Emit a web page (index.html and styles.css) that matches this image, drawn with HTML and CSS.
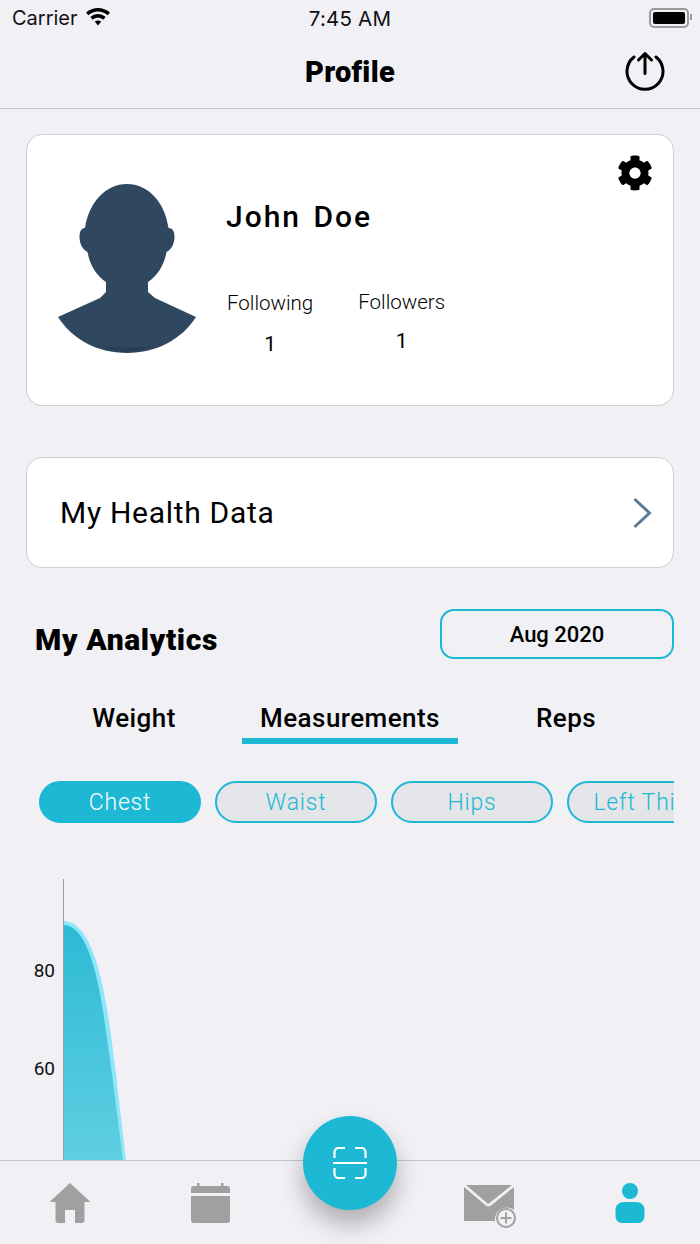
FILE: index.html
```html
<!DOCTYPE html>
<html lang="en">
<head>
    <meta charset="UTF-8">
    <meta name="viewport" content="width=device-width, initial-scale=1.0">
    <title>Profile</title>
    <link rel="stylesheet" href="styles.css">
</head>
<body>
    <div class="status-bar">
        <div class="status-left">
            <span>Carrier</span>
            <svg class="wifi" viewBox="0 0 26 20">
                <path d="M1 6.500C8 .5 18 .5 25 6.500l-2.400 2.700C16.800 4.400 9.200 4.400 3.400 9.200z"/>
                <path d="M5.300 11C10 7 16 7 20.700 11l-2.500 2.700c-3-2.600-7.400-2.600-10.400 0z"/>
                <path d="M9.800 15.600c2-1.500 4.400-1.500 6.400 0L13 19.500z"/>
            </svg>
        </div>
        <span class="status-time">7:45 AM</span>
        <div class="battery"><div class="battery-level"></div></div>
    </div>

    <header class="nav-bar">
        <h1>Profile</h1>
        <svg class="share-icon" viewBox="0 0 40 40">
            <path d="M9 6A18 18 0 1 0 31 6" fill="none" stroke="#000" stroke-width="3" stroke-linecap="round"/>
            <path d="M20 22.500V2.500M13.500 9 20 2.500 26.500 9" fill="none" stroke="#000" stroke-width="3" stroke-linecap="round" stroke-linejoin="round"/>
        </svg>
    </header>

    <main class="content">
        <section class="card profile-card">
            <svg class="gear" viewBox="0 0 512 512">
                <path d="M487.400 315.700l-42.600-24.600c4.300-23.200 4.300-47 0-70.200l42.600-24.600c4.900-2.800 7.100-8.600 5.500-14-11.100-35.600-30-67.800-54.700-94.600-3.800-4.100-10-5.100-14.800-2.300L380.800 110c-17.900-15.400-38.500-27.300-60.800-35.100V25.800c0-5.600-3.900-10.500-9.400-11.700-36.700-8.200-74.300-7.800-109.200 0-5.500 1.200-9.400 6.100-9.400 11.700V75c-22.200 7.900-42.800 19.800-60.800 35.100L88.700 85.500c-4.900-2.800-11-1.900-14.800 2.300-24.700 26.700-43.600 58.900-54.700 94.600-1.700 5.400.6 11.200 5.500 14L67.300 221c-4.300 23.200-4.300 47 0 70.200l-42.600 24.600c-4.900 2.800-7.100 8.600-5.500 14 11.100 35.600 30 67.800 54.700 94.600 3.800 4.100 10 5.100 14.800 2.300l42.600-24.600c17.900 15.400 38.500 27.300 60.800 35.100v49.200c0 5.600 3.900 10.500 9.400 11.700 36.700 8.200 74.300 7.800 109.200 0 5.500-1.200 9.400-6.100 9.400-11.700v-49.200c22.200-7.900 42.800-19.800 60.800-35.100l42.600 24.600c4.900 2.800 11 1.900 14.800-2.300 24.700-26.700 43.600-58.900 54.700-94.600 1.500-5.500-.7-11.300-5.600-14.100zM256 336c-44.100 0-80-35.900-80-80s35.900-80 80-80 80 35.900 80 80-35.900 80-80 80z"/>
            </svg>
            <svg class="avatar" viewBox="28 44 138 170">
                <path fill="#2f4860" d="M97 44C76 44 59 62 55 88C51 88 49.500 92 49.500 97C49.500 104 53 110 57.500 112C60 126 67 136 76 142V152L70 158L28 177C42 199 67 213 97 213C127 213 152 199 166 177L125 158L118 152V142C127 136 134 126 136.500 112C141 110 144.500 104 144.500 97C144.500 92 143 88 138.500 88C135 62 118 44 97 44Z"/>
                <path fill="#2a3d52" d="M72 206C88 214 106 214 122 206C106 208 88 208 72 206Z"/>
            </svg>
            <div class="profile-info">
                <h2>John Doe</h2>
                <div class="stats">
                    <div class="stat">
                        <span class="stat-label">Following</span>
                        <span class="stat-value">1</span>
                    </div>
                    <div class="stat stat-followers">
                        <span class="stat-label">Followers</span>
                        <span class="stat-value">1</span>
                    </div>
                </div>
            </div>
        </section>

        <section class="card health-card">
            <span>My Health Data</span>
            <svg class="chevron" viewBox="0 0 20 32">
                <path d="M2.500 2 17.500 16 2.500 30" fill="none" stroke="#5b7c99" stroke-width="3"/>
            </svg>
        </section>

        <div class="analytics-head">
            <h3>My Analytics</h3>
            <button class="date-button">Aug 2020</button>
        </div>

        <div class="tabs">
            <div class="tab">Weight</div>
            <div class="tab active">Measurements</div>
            <div class="tab">Reps</div>
        </div>

        <div class="chips">
            <div class="chip active">Chest</div>
            <div class="chip">Waist</div>
            <div class="chip">Hips</div>
            <div class="chip">Left Thigh</div>
        </div>

        <!-- only the first bit of the curve is visible above the tab bar -->
        <svg class="chart" viewBox="0 0 700 281">
            <defs>
                <linearGradient id="area" x1="0" y1="0" x2="0" y2="1">
                    <stop offset="0" stop-color="#2dbad4"/>
                    <stop offset="1" stop-color="#5fcfe2"/>
                </linearGradient>
            </defs>
            <path fill="#8fe6fa" d="M63.500 42C82 42 97 68 107 130C115 180 121 240 126 281H63.500Z"/>
            <path fill="url(#area)" d="M63.500 46C80 46 94 72 103 132C111 185 118 240 123 281H63.500Z"/>
            <line x1="63.500" y1="0" x2="63.500" y2="281" stroke="#a0a0a6" stroke-width="1"/>
            <text x="55" y="98" class="axis-label" text-anchor="end">80</text>
            <text x="55" y="196" class="axis-label" text-anchor="end">60</text>
        </svg>
    </main>

    <nav class="tab-bar">
        <div class="tab-item">
            <svg class="home-icon" width="42" height="40" viewBox="0 0 42 40">
                <path fill="#a0a0a0" d="M21 0 41.500 19H35.500V37a3 3 0 0 1-3 3H26V27H16V40H9.500a3 3 0 0 1-3-3V19H.5Z"/>
            </svg>
        </div>
        <div class="tab-item">
            <svg width="39" height="40" viewBox="0 0 39 40">
                <path fill="#a0a0a0" d="M6 0h2.500v3H30V0h2.500v3H36a3 3 0 0 1 3 3v4H0V6a3 3 0 0 1 3-3h3ZM0 13H39V37a3 3 0 0 1-3 3H3a3 3 0 0 1-3-3Z"/>
            </svg>
        </div>
        <div class="tab-item"></div>
        <div class="tab-item">
            <svg class="mail-icon" width="52" height="46" viewBox="0 0 52 46">
                <path fill="#a0a0a0" d="M0 2 22 20.500a4 4 0 0 0 5 0L50 2V25A12 12 0 0 0 31 36H0Z"/>
                <path fill="#a0a0a0" d="M2 0H48L25 18.500a1.500 1.500 0 0 1-1.500 0Z"/>
                <circle cx="42" cy="33" r="9" fill="none" stroke="#a0a0a0" stroke-width="2"/>
                <path d="M42 27.500V38.500M36.500 33H47.500" stroke="#a0a0a0" stroke-width="2"/>
            </svg>
        </div>
        <div class="tab-item">
            <svg width="30" height="40" viewBox="0 0 30 40">
                <circle cx="15" cy="8" r="8" fill="#1cb8d4"/>
                <path fill="#1cb8d4" d="M9 19H21C26 19 29.500 22 29.500 27V33C29.500 37 27 40 23 40H7C3 40 .5 37 .5 33V27C.5 22 4 19 9 19Z"/>
            </svg>
        </div>
        <button class="scan-button">
            <svg width="34" height="32" viewBox="0 0 34 32">
                <path d="M1.500 11V5a4 4 0 0 1 4-4H12M22 1h6.500a4 4 0 0 1 4 4v6M1.500 21v6a4 4 0 0 0 4 4H12M22 31h6.500a4 4 0 0 0 4-4v-6M0 16H34" fill="none" stroke="#fff" stroke-width="2.200"/>
            </svg>
        </button>
    </nav>
</body>
</html>
```

FILE: styles.css
```css
* {
    margin: 0;
    padding: 0;
    box-sizing: border-box;
}
html, body {
    width: 700px;
    height: 1244px;
    overflow: hidden;
}
body {
    font-family: Roboto, "Open Sans", sans-serif;
    background-color: #f0f0f5;
    color: #000;
    display: flex;
    flex-direction: column;
}

/* Status bar */
.status-bar {
    height: 40px;
    flex-shrink: 0;
    padding: 0 11px 4px 12px;
    display: flex;
    align-items: center;
    justify-content: space-between;
    position: relative;
    font-family: Inter, Roboto, sans-serif;
    font-size: 20px;
    color: #111;
}
.status-left {
    display: flex;
    align-items: center;
    gap: 7px;
}
.wifi {
    width: 26px;
    height: 20px;
    margin-top: -4px;
}
.status-time {
    position: absolute;
    left: 0;
    right: 0;
    text-align: center;
    font-size: 20.5px;
    letter-spacing: 0.2px;
}
.battery {
    width: 40px;
    height: 20px;
    padding: 2px;
    border: 2px solid #9a9a9a;
    border-radius: 5px;
    position: relative;
}
.battery::after {
    content: "";
    position: absolute;
    right: -5px;
    top: 4px;
    width: 2px;
    height: 6px;
    background-color: #9a9a9a;
}
.battery-level {
    height: 100%;
    background-color: #000;
    border-radius: 2px;
}

/* Nav bar */
.nav-bar {
    height: 69px;
    flex-shrink: 0;
    border-bottom: 1px solid #c4c4c8;
    display: flex;
    align-items: center;
    justify-content: center;
    position: relative;
}
.nav-bar h1 {
    font-size: 29px;
    font-weight: 900;
    letter-spacing: 0.3px;
    margin-bottom: 5px;
}
.share-icon {
    position: absolute;
    right: 35px;
    top: 11px;
    width: 40px;
    height: 40px;
}

/* Main content */
.content {
    flex: 1;
    min-height: 0;
    overflow: hidden;
    padding: 25px 26px 0;
}
.card {
    background-color: #fff;
    border: 1px solid #cfcfd3;
    border-radius: 16px;
}
.profile-card {
    height: 272px;
    padding: 49px 0 0 31px;
    display: flex;
    gap: 30px;
    position: relative;
}
.gear {
    position: absolute;
    top: 20px;
    right: 20px;
    width: 36px;
    height: 36px;
}
.avatar {
    width: 138px;
    height: 170px;
}
.profile-info h2 {
    font-size: 30px;
    font-weight: 500;
    letter-spacing: 2px;
    word-spacing: 3px;
    margin-top: 15px;
}
.stats {
    display: flex;
    margin-top: 57px;
    margin-left: 1px;
    gap: 45px;
}
.stat {
    display: flex;
    flex-direction: column;
    align-items: center;
    font-size: 20.5px;
    font-weight: 300;
    gap: 17px;
}
.stat-followers {
    margin-top: -1px;
    gap: 15px;
}
.stat-value {
    font-size: 21px;
    font-weight: 400;
}
.health-card {
    height: 111px;
    margin-top: 51px;
    padding: 0 21px 0 33px;
    display: flex;
    align-items: center;
    justify-content: space-between;
    font-size: 30px;
    letter-spacing: 0.7px;
}
.chevron {
    width: 20px;
    height: 32px;
}
.analytics-head {
    margin-top: 41px;
    padding-left: 9px;
    display: flex;
    align-items: center;
    justify-content: space-between;
}
.analytics-head h3 {
    font-size: 30px;
    font-weight: 900;
    letter-spacing: 0.65px;
    margin-top: 10px;
}
.date-button {
    width: 234px;
    height: 50px;
    background: none;
    border: 2px solid #1cb8d4;
    border-radius: 14px;
    font-family: inherit;
    font-size: 22px;
    font-weight: 500;
    color: #000;
}
.tabs {
    margin-top: 41px;
    display: grid;
    grid-template-columns: repeat(3, 216px);
}
.tab {
    height: 44px;
    text-align: center;
    font-size: 26px;
    font-weight: 500;
    letter-spacing: 0.45px;
    line-height: 37px;
}
.tab.active {
    border-bottom: 6px solid #1cb8d4;
}
.chips {
    margin-top: 37px;
    padding-left: 13px;
    display: flex;
    gap: 14px;
    overflow: hidden;
}
.chip {
    flex: 0 0 162px;
    height: 42px;
    background-color: #e3e5e8;
    border: 2px solid #1cb8d4;
    border-radius: 21px;
    color: #1cb8d4;
    font-size: 23px;
    font-weight: 300;
    letter-spacing: 0.8px;
    line-height: 40px;
    text-align: center;
    white-space: nowrap;
}
.chip.active {
    background-color: #1cb8d4;
    color: #fff;
}
.chart {
    display: block;
    width: 700px;
    height: 281px;
    margin: 56px 0 0 -26px;
}
.axis-label {
    font-family: Roboto, sans-serif;
    font-size: 19px;
    fill: #111;
}

/* Bottom tab bar */
.tab-bar {
    height: 84px;
    flex-shrink: 0;
    border-top: 1px solid #c4c4c8;
    display: grid;
    grid-template-columns: repeat(5, 140px);
    position: relative;
}
.tab-item {
    padding-top: 22px;
    display: flex;
    justify-content: center;
    align-items: flex-start;
}
.home-icon {
    margin-left: -1px;
}
.mail-icon {
    margin-top: 2px;
    margin-left: -1px;
}
.scan-button {
    position: absolute;
    left: 303px;
    top: -45px;
    width: 94px;
    height: 94px;
    border: none;
    border-radius: 50%;
    background-color: #1cb8d4;
    box-shadow: 0 14px 24px rgba(0, 0, 0, 0.28);
    display: flex;
    align-items: center;
    justify-content: center;
}
```
